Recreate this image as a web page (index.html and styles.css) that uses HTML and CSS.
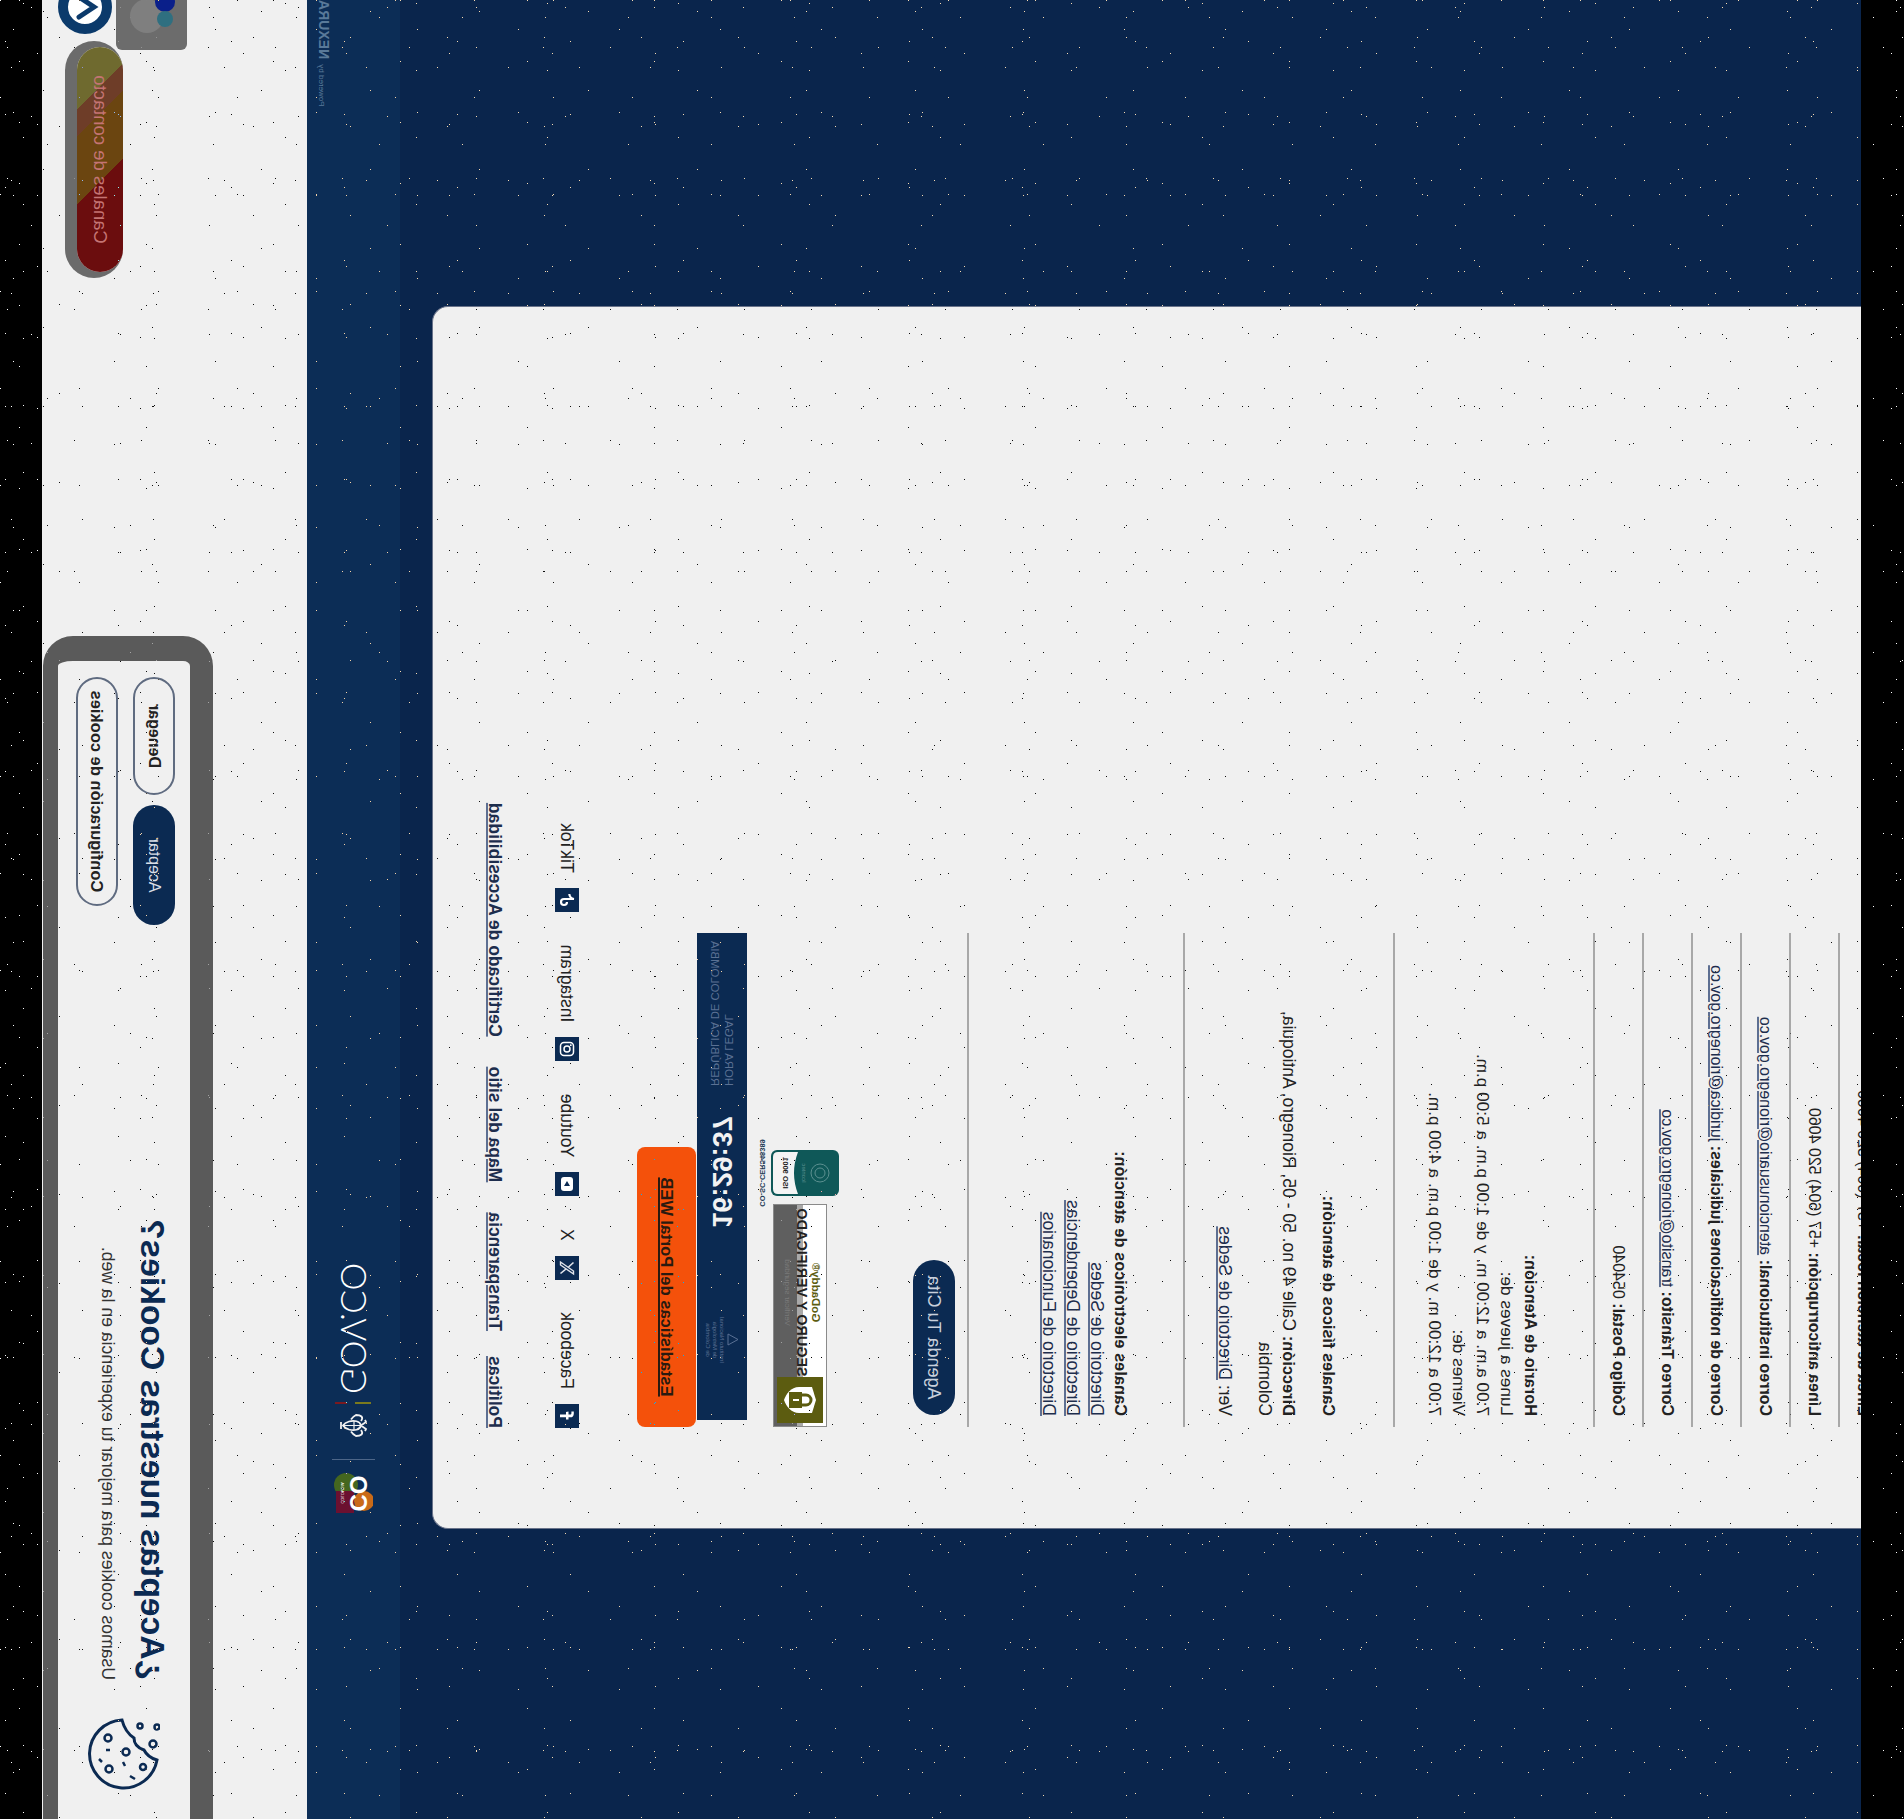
FILE: index.html
```html
<!DOCTYPE html>
<html lang="es">
<head>
    <meta charset="utf-8">
    <title>Alcaldía de Rionegro</title>
    <link rel="stylesheet" href="styles.css">
</head>
<body>
<div class="sheet">
    <div class="main">
        <div class="card">
            <div class="info-row"><b>Línea de atención local:</b> +57 (604) 520 4060</div>
            <div class="info-row"><b>Línea anticorrupción:</b> +57 (604) 520 4060</div>
            <div class="info-row"><b>Correo institucional:</b> <a href="#">atencionusuario@rionegro.gov.co</a></div>
            <div class="info-row"><b>Correo de notificaciones judiciales:</b> <a href="#">juridica@rionegro.gov.co</a></div>
            <div class="info-row"><b>Correo Tránsito:</b> <a href="#">transito@rionegro.gov.co</a></div>
            <div class="info-row"><b>Código Postal:</b> 054040</div>

            <div class="info-row block schedule">
                <b>Horario de Atención:</b><br>
                Lunes a jueves de:<br>
                7:00 a.m. a 12:00 m. y de 1:00 p.m. a 5:00 p.m.<br>
                Viernes de:<br>
                7:00 a 12:00 m. y de 1:00 p.m. a 4:00 p.m.
            </div>

            <div class="info-row block places">
                <p><b>Canales físicos de atención:</b></p>
                <p><b>Dirección:</b> Calle 49 no. 50 - 05, Rionegro, Antioquia,<br>Colombia</p>
                <p>Ver: <a href="#">Directorio de Sedes</a></p>
            </div>

            <div class="info-row block online">
                <b>Canales electrónicos de atención:</b><br>
                <a href="#">Directorio de Sedes</a><br>
                <a href="#">Directorio de Dependencias</a><br>
                <a href="#">Directorio de Funcionarios</a>
            </div>

            <a class="appointment" href="#">Agenda Tu Cita</a>

            <div class="badges">
                <div class="secure-badge">
                    <div class="secure-lock">
                        <svg width="30" height="34" viewBox="0 0 30 34">
                            <path d="M15 1 L28 5 V18 C28 26 21 31 15 33 C9 31 2 26 2 18 V5 Z" fill="#fff"/>
                            <rect x="7" y="15" width="16" height="13" fill="#5c5c10"/>
                            <path d="M10 15 V11 A5 5 0 0 1 20 11 V15" fill="none" stroke="#5c5c10" stroke-width="3"/>
                            <rect x="14" y="18" width="2" height="6" fill="#fff"/>
                        </svg>
                    </div>
                    <div class="secure-text">
                        <span class="secure-brand">GoDaddy®</span>
                        <span class="secure-title">SEGURO Y VERIFICADO</span>
                        <span class="secure-note">Verificar seguridad</span>
                    </div>
                </div>
                <div class="iso">
                    <svg width="48" height="70" viewBox="0 0 48 70">
                        <rect x="1" y="1" width="46" height="68" rx="6" fill="#0f5858"/>
                        <path d="M3 42 Q24 50 45 42 V62 Q45 67 40 67 H8 Q3 67 3 62 Z" fill="#f4f4f4"/>
                        <circle cx="24" cy="20" r="9" fill="none" stroke="#5c9090" stroke-width="1"/>
                        <circle cx="24" cy="20" r="5" fill="none" stroke="#5c9090" stroke-width="1"/>
                        <text x="24" y="38" class="iso-small">Icontec</text>
                        <text x="24" y="57" class="iso-name">ISO 9001</text>
                    </svg>
                    <span class="iso-code">CO-SC-CER548389</span>
                </div>
            </div>

            <div class="clock">
                <div class="clock-inst">
                    <svg width="13" height="12" viewBox="0 0 13 12"><path d="M6.500 1 L12 11 H1 Z" fill="none" stroke="#5b7194"/></svg>
                    <span>Instituto Nacional<br>de Metrología<br>de Colombia</span>
                </div>
                <div class="clock-time">16:29:37</div>
                <div class="clock-legend">HORA LEGAL<br>REPÚBLICA DE COLOMBIA</div>
            </div>

            <a class="stats" href="#">Estadísticas del Portal WEB</a>

            <div class="social">
                <a href="#" class="social-item">
                    <span class="social-icon"><svg viewBox="0 0 24 24" width="24" height="24"><path d="M13.500 19 V13 H16 L16.400 10.500 H13.500 V9 C13.500 8 14 7.600 15 7.600 H16.500 V5.200 H14.300 C11.800 5.200 10.700 6.600 10.700 8.700 V10.500 H8.500 V13 H10.700 V19 Z" fill="#fff"/></svg></span>Facebook
                </a>
                <a href="#" class="social-item">
                    <span class="social-icon"><svg viewBox="0 0 24 24" width="24" height="24"><path d="M6 5.500 H9 L18 18.500 H15 Z" fill="none" stroke="#dfe3ea" stroke-width="1.400"/><path d="M17.500 5.500 L13 10.500 M11 13 L6.500 18.500" stroke="#dfe3ea" stroke-width="1.600" fill="none"/></svg></span>X
                </a>
                <a href="#" class="social-item">
                    <span class="social-icon"><svg viewBox="0 0 24 24" width="24" height="24"><rect x="5" y="6" width="14" height="12" rx="3" fill="#fff"/><path d="M10 9 L15 12 L10 15 Z" fill="#0b2a52"/></svg></span>Youtube
                </a>
                <a href="#" class="social-item">
                    <span class="social-icon"><svg viewBox="0 0 24 24" width="24" height="24"><rect x="5.500" y="5.500" width="13" height="13" rx="3.500" fill="none" stroke="#fff" stroke-width="1.500"/><circle cx="12" cy="12" r="3" fill="none" stroke="#fff" stroke-width="1.500"/><circle cx="15.800" cy="8.200" r="0.900" fill="#fff"/></svg></span>Instagram
                </a>
                <a href="#" class="social-item">
                    <span class="social-icon"><svg viewBox="0 0 24 24" width="24" height="24"><path d="M13 5 V15 A3 3 0 1 1 10 12 M13 5 C13.500 8 15.500 9.500 18 9.700" fill="none" stroke="#fff" stroke-width="2.200"/></svg></span>TikTok
                </a>
            </div>

            <div class="footer-links">
                <a href="#">Políticas</a>
                <a href="#">Transparencia</a>
                <a href="#">Mapa del sitio</a>
                <a href="#">Certificado de Accesibilidad</a>
            </div>
        </div>
    </div>

    <div class="govbar">
        <svg class="co-logo" width="40" height="40" viewBox="0 0 40 40">
            <circle cx="28" cy="27" r="12" fill="#44661f"/>
            <rect x="0" y="19" width="22" height="18" fill="#6b1030"/>
            <circle cx="12" cy="9" r="10" fill="#c96a18"/>
            <text x="19.500" y="23" class="co-mark">CO</text>
            <text x="20" y="32" class="co-word">COLOMBIA</text>
        </svg>
        <span class="gov-sep"></span>
        <svg class="escudo" width="23" height="31" viewBox="0 0 23 31">
            <path d="M11.500 8 C7 9 6 15 7.500 20 C8.500 23 10 25 11.500 26 C13 25 14.500 23 15.500 20 C17 15 16 9 11.500 8 Z" fill="none" stroke="#f0f0f0" stroke-width="1.800"/>
            <path d="M11.500 8 V26 M7 15 H16" stroke="#f0f0f0" stroke-width="1.200" fill="none"/>
            <path d="M7 8 C3 5 1 8 1 13 C2 15 4 17 5.500 18 M16 8 C20 5 22 8 22 13 C21 15 19 17 17.500 18 M11.500 8 L8 3 L6 4 M11.500 8 L15 3 L17 4 M8 28 H15" fill="none" stroke="#f0f0f0" stroke-width="1.800"/>
        </svg>
        <span class="gov-flag"></span>
        <span class="gov-name">GOV.CO</span>
        <span class="powered">Powered by <b>NEXURA</b></span>
    </div>

    <div class="floor">
        <a class="contact-pill" href="#">Canales de contacto</a>
        <div class="help-tile">
            <svg width="70" height="71" viewBox="0 0 70 71">
                <circle cx="34" cy="40" r="17" fill="#7f7f7f"/>
                <circle cx="48" cy="22" r="10" fill="#0a1f8a"/>
                <circle cx="31" cy="22" r="8" fill="#2f6f80"/>
            </svg>
        </div>
        <a class="to-top" href="#">
            <svg width="54" height="54" viewBox="0 0 54 54">
                <circle cx="27" cy="27" r="22" fill="#fff" stroke="#0b3a6b" stroke-width="10"/>
                <path d="M17 32 L27 17 L37 32" transform="translate(0 1)" fill="none" stroke="#0b3a6b" stroke-width="5" stroke-linecap="round"/>
            </svg>
        </a>

        <div class="cookie-banner">
            <svg class="cookie-icon" width="72" height="72" viewBox="0 0 72 72">
                <path d="M70 38 A34 34 0 1 1 30 3 C32 10 36 14 40 16 C42 22 46 26 52 26 C56 32 62 36 70 38 Z" fill="none" stroke="#0b2a52" stroke-width="3"/>
                <g fill="none" stroke="#0b2a52" stroke-width="2.500">
                    <circle cx="64" cy="20" r="2.500"/>
                    <circle cx="63" cy="3" r="2.500"/>
                    <circle cx="46" cy="7" r="3.500"/>
                    <circle cx="52" cy="52" r="3.500"/>
                    <circle cx="38" cy="34" r="3.500"/>
                    <circle cx="21" cy="51" r="3.500"/>
                    <circle cx="23" cy="17" r="3"/>
                    <path d="M24 35 L28 37 M11 25 L14 30 M28 58 L31 61 M40 50 L40 54"/>
                </g>
            </svg>
            <div class="cookie-text">
                <h2>¿Aceptas nuestras Cookies?</h2>
                <p>Usamos cookies para mejorar tu experiencia en la web.</p>
            </div>
            <div class="cookie-buttons">
                <button class="btn-accept">Aceptar</button>
                <button class="btn-plain btn-deny">Denegar</button>
                <button class="btn-plain btn-config">Configuración de cookies</button>
            </div>
        </div>
    </div>
</div>
<div class="grain"></div>
</body>
</html>
```

FILE: styles.css
```css
html, body {
    margin: 0;
    height: 100%;
    overflow: hidden;
    background: #000;
}

/* the whole page is flipped along its anti-diagonal */
.sheet {
    width: 1904px;
    height: 1819px;
    transform-origin: 0 0;
    transform: matrix(0, -1, -1, 0, 1861, 1861);
    display: flex;
    flex-direction: column;
    overflow: hidden;
    position: relative;
    background: #f0f0f0;
    color: #222;
    font-family: "Liberation Sans", Arial, sans-serif;
    font-size: 16px;
    line-height: 24px;
}

.grain {
    --dot: radial-gradient(circle at .5px .5px, #fff .7px, transparent .7px);
    position: fixed;
    inset: 0;
    pointer-events: none;
    mix-blend-mode: difference;
    background-image: var(--dot), var(--dot), var(--dot), var(--dot), var(--dot), var(--dot), var(--dot), var(--dot), var(--dot), var(--dot), var(--dot), var(--dot);
    background-size: 79px 97px, 101px 83px, 89px 109px, 113px 73px, 83px 127px, 131px 67px, 103px 71px, 71px 113px, 97px 89px, 127px 61px, 109px 79px, 67px 131px;
    background-position: 0 0, 13px 29px, 31px 7px, 5px 41px, 47px 17px, 23px 3px, 37px 53px, 11px 67px, 59px 37px, 19px 61px, 43px 11px, 7px 47px;
}

a {
    color: #1d2d4d;
    text-decoration-color: #5d6f92;
    text-decoration-thickness: 2px;
}

/* main */
.main {
    background: #0a254c;
    padding: 0 17px 32px 0;
}

.card {
    width: 1120px;
    margin: -26px 0 0 332px;
    padding: 0 0 52px 101px;
    background: #f0f0f0;
    border: 1px solid #69738a;
    border-top: 0;
    border-radius: 0 0 16px 16px;
}

.info-row {
    width: 472px;
    padding: 12px 11px 11px;
    border-bottom: 2px solid #a8a8a8;
}

.block {
    font-size: 17.500px;
}

.block b {
    font-size: 16.400px;
}

.schedule {
    padding: 50px 11px 28px;
    font-size: 17.200px;
}

.places {
    padding: 52px 11px 28px;
}

.places p {
    margin: 0 0 16px;
}

.places p:last-child {
    margin: 0;
}

.online {
    padding: 50px 11px 68px;
}

.appointment {
    display: block;
    width: 155px;
    height: 42px;
    margin: 12px 0 0 12px;
    border-radius: 21px;
    background: #0b2a52;
    color: #c8d0dc;
    font-size: 18px;
    text-align: center;
    line-height: 42px;
    text-decoration: none;
}

/* badges */
.badges {
    display: flex;
    gap: 1px;
    margin-top: 73px;
}

.secure-badge {
    box-sizing: border-box;
    display: flex;
    width: 223px;
    height: 54px;
    margin-top: 13px;
    padding: 3px;
    border: 1px solid #8a8a8a;
    background: linear-gradient(#fff 0 23px, #a9a9a9 23px 29px, #5f5f5f 29px);
}

.secure-lock {
    display: flex;
    align-items: center;
    justify-content: center;
    width: 46px;
    height: 46px;
    background: #5c5c10;
}

.secure-text {
    flex: 1;
    display: flex;
    flex-direction: column;
    align-items: center;
    white-space: nowrap;
}

.secure-brand {
    color: #5c5c10;
    font-size: 11.500px;
    font-weight: bold;
    line-height: 9px;
    margin-top: 3px;
}

.secure-title {
    color: #222;
    font-size: 14.400px;
    font-weight: bold;
    line-height: 14px;
    margin-top: 2px;
}

.secure-note {
    color: #7a7a7a;
    font-size: 8px;
    line-height: 10px;
    margin-top: 3px;
}

.iso {
    display: flex;
    flex-direction: column;
    align-items: center;
    width: 60px;
}

.iso svg {
    display: block;
}

.iso-small {
    fill: #5c9090;
    font-size: 6px;
    text-anchor: middle;
}

.iso-name {
    fill: #222;
    font-size: 7.500px;
    font-weight: bold;
    text-anchor: middle;
}

.iso-code {
    margin-top: 3px;
    color: #1e3a55;
    font-size: 7.500px;
    font-weight: bold;
    line-height: 10px;
    white-space: nowrap;
}

/* clock */
.clock {
    display: flex;
    align-items: center;
    width: 487px;
    height: 50px;
    margin: 10px 0 0 7px;
    background: #0b2a52;
    color: #5b7194;
}

.clock-inst {
    display: flex;
    flex-direction: column;
    align-items: center;
    width: 60px;
    margin-left: 50px;
    font-size: 6px;
    line-height: 7px;
    text-align: center;
}

.clock-inst svg {
    display: block;
    margin-bottom: 2px;
}

.clock-time {
    margin-left: 82px;
    color: #f2f2f2;
    font-size: 28px;
    font-weight: bold;
    line-height: 30px;
}

.clock-legend {
    margin-left: 30px;
    font-size: 11.300px;
    line-height: 14px;
    white-space: nowrap;
}

.stats {
    display: block;
    width: 280px;
    height: 59px;
    margin-top: 1px;
    border-radius: 8px;
    background: #f4510b;
    color: #2a1a10;
    font-size: 16.500px;
    font-weight: bold;
    line-height: 59px;
    text-align: center;
    text-decoration-color: #2a1a10;
}

/* social */
.social {
    display: flex;
    gap: 32.500px;
    margin: 58px 0 0 -1px;
    font-size: 17.500px;
}

.social-item {
    display: flex;
    align-items: center;
    gap: 15px;
    color: #222;
    text-decoration: none;
}

.social-icon {
    display: block;
    width: 24px;
    height: 24px;
    background: #0b2a52;
}

.social-icon svg {
    display: block;
}

.footer-links {
    display: flex;
    gap: 30px;
    margin: 50px 0 0 -1px;
    font-size: 17.500px;
    font-weight: bold;
    line-height: 20px;
}

.footer-links a:first-child {
    margin-right: -5px;
}

/* gov.co strip */
.govbar {
    display: flex;
    align-items: center;
    height: 93px;
    padding: 0 43px 0 348px;
    background: #0c2d56;
    color: #fff;
}

.co-logo, .escudo {
    display: block;
    flex: none;
}

.co-mark {
    fill: #fff;
    font-size: 24px;
    font-weight: bold;
    text-anchor: middle;
}

.co-word {
    fill: #fff;
    font-size: 4px;
    text-anchor: middle;
}

.gov-sep {
    width: 1px;
    height: 43px;
    margin: 0 22px 0 13px;
    background: #4d6688;
}

.gov-flag {
    width: 2px;
    height: 36px;
    margin: 0 8px 0 10px;
    background: linear-gradient(#7a7a1e 0 16px, transparent 16px 24px, #7a1a20 24px);
}

.gov-name {
    margin-bottom: 4px;
    font-family: Lato, "Liberation Sans", sans-serif;
    font-size: 35px;
    font-weight: 300;
    line-height: 40px;
}

.powered {
    align-self: flex-end;
    margin: 0 0 8px auto;
    color: #5a7a9a;
    font-size: 8px;
    line-height: 12px;
}

.powered b {
    margin-left: 3px;
    font-size: 14px;
}

/* bottom */
.floor {
    position: relative;
    flex: 1;
    background: #f0f0f0;
}

.contact-pill {
    position: absolute;
    left: 1589px;
    top: 184px;
    width: 225px;
    height: 46px;
    border-radius: 23px;
    background: linear-gradient(135deg, #6b0d0e 0 42%, #6b4510 42% 67%, #6e3d28 67% 77%, #6f6a2f 77%);
    box-shadow: 0 6px 0 6px #6b6b6b;
    color: #c47474;
    font-size: 18.500px;
    line-height: 46px;
    text-align: center;
    text-decoration: none;
}

.help-tile {
    position: absolute;
    left: 1811px;
    top: 120px;
    width: 70px;
    height: 71px;
    border-radius: 6px;
    background: #6c6c6c;
}

.to-top {
    position: absolute;
    left: 1827px;
    top: 195px;
    width: 54px;
    height: 54px;
}

.cookie-banner {
    position: absolute;
    left: 20px;
    top: 94px;
    width: 1113px;
    height: 132px;
    display: flex;
    align-items: flex-start;
    padding: 0 16px 0 51px;
    border: solid #5a5a5a;
    border-width: 23px 25px 15px 0;
    border-radius: 0 30px 30px 0;
    background: #f0f0f0;
}

.cookie-icon {
    flex: none;
    margin-top: 30px;
}

.cookie-text {
    margin: 18px 0 0 38px;
    color: #333;
}

.cookie-text h2 {
    margin: 0;
    color: #0b2a52;
    font-size: 33.600px;
    line-height: 40px;
}

.cookie-text p {
    margin: 12px 0 0;
    font-size: 17.600px;
    line-height: 24px;
}

.cookie-buttons {
    display: flex;
    flex-wrap: wrap;
    justify-content: flex-end;
    gap: 15px 10px;
    width: 300px;
    margin: 15px 0 0 auto;
}

.cookie-buttons button {
    box-sizing: border-box;
    height: 42px;
    border-radius: 21px;
    font-family: inherit;
    font-size: 16px;
}

.btn-accept {
    width: 120px;
    border: 0;
    background: #0b2a52;
    color: #d8dde6;
}

.btn-plain {
    border: 2px solid #5f6b80;
    background: #f0f0f0;
    color: #222;
    font-weight: bold;
}

.btn-deny {
    width: 118px;
}

.cookie-buttons .btn-config {
    width: 229px;
    font-size: 16.500px;
}
```
